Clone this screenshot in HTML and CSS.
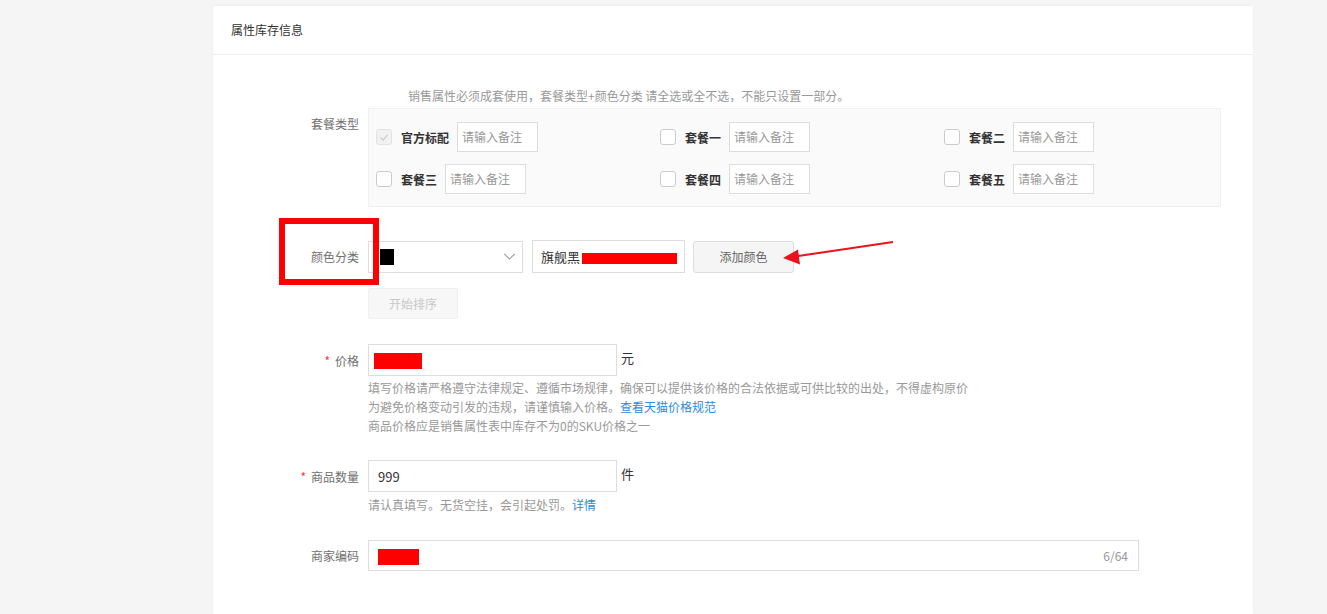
FILE: index.html
```html
<!DOCTYPE html>
<html lang="zh-CN">
<head>
<meta charset="utf-8">
<title>属性库存信息</title>
<link rel="stylesheet" href="styles.css">
</head>
<body>
<div class="page">
  <div class="card">
    <div class="card-head">属性库存信息</div>
    <div class="card-body">
      <div class="notice">销售属性必须成套使用，套餐类型+颜色分类 请全选或全不选，不能只设置一部分。</div>

      <div class="row row-set">
        <div class="label label-top">套餐类型</div>
        <div class="set-box">
          <div class="set-item">
            <span class="check check-disabled"><svg viewBox="0 0 16 16" width="14" height="14"><path d="M4 8.5l3 3 5-6" fill="none" stroke="#c8c8c8" stroke-width="1.4"/></svg></span>
            <span class="set-name">官方标配</span>
            <span class="note-input">请输入备注</span>
          </div>
          <div class="set-item">
            <span class="check"></span>
            <span class="set-name">套餐一</span>
            <span class="note-input">请输入备注</span>
          </div>
          <div class="set-item">
            <span class="check"></span>
            <span class="set-name">套餐二</span>
            <span class="note-input">请输入备注</span>
          </div>
          <div class="set-item">
            <span class="check"></span>
            <span class="set-name">套餐三</span>
            <span class="note-input">请输入备注</span>
          </div>
          <div class="set-item">
            <span class="check"></span>
            <span class="set-name">套餐四</span>
            <span class="note-input">请输入备注</span>
          </div>
          <div class="set-item">
            <span class="check"></span>
            <span class="set-name">套餐五</span>
            <span class="note-input">请输入备注</span>
          </div>
        </div>
      </div>

      <div class="row row-color">
        <div class="label">颜色分类</div>
        <div class="color-select">
          <span class="swatch"></span>
          <svg class="chev" viewBox="0 0 14 8" width="13" height="7"><path d="M1 1l6 6 6-6" fill="none" stroke="#999" stroke-width="1.2"/></svg>
        </div>
        <div class="color-name"><span>旗舰黑</span><span class="redact redact-color"></span></div>
        <div class="btn-add">添加颜色</div>
      </div>

      <div class="sort-row">
        <div class="btn-sort">开始排序</div>
      </div>

      <div class="row row-price">
        <div class="label"><span class="req">*</span>价格</div>
        <div class="text-input price-input"><span class="redact redact-price"></span></div>
        <span class="unit">元</span>
      </div>
      <div class="hints">
        <div>填写价格请严格遵守法律规定、遵循市场规律，确保可以提供该价格的合法依据或可供比较的出处，不得虚构原价</div>
        <div>为避免价格变动引发的违规，请谨慎输入价格。<a class="link">查看天猫价格规范</a></div>
        <div>商品价格应是销售属性表中库存不为0的SKU价格之一</div>
      </div>

      <div class="row row-qty">
        <div class="label"><span class="req">*</span>商品数量</div>
        <div class="text-input qty-input">999</div>
        <span class="unit">件</span>
      </div>
      <div class="hints hints-qty">
        <div>请认真填写。无货空挂，会引起处罚。<a class="link">详情</a></div>
      </div>

      <div class="row row-code">
        <div class="label">商家编码</div>
        <div class="text-input code-input"><span class="redact redact-code"></span><span class="count">6/64</span></div>
      </div>
    </div>
  </div>

  <div class="mark-box"></div>
  <svg class="arrow" width="1327" height="614" viewBox="0 0 1327 614">
    <line x1="893" y1="242" x2="795" y2="256.5" stroke="#e8141b" stroke-width="2"/>
    <path d="M783 258 L798 249.5 L800 264.5 Z" fill="#e8141b"/>
  </svg>
</div>
</body>
</html>
```

FILE: styles.css
```css
* { box-sizing: border-box; }
html, body { margin: 0; padding: 0; }
body {
  background: #f5f5f5;
  font-family: "Noto Sans CJK SC", "Liberation Sans", sans-serif;
  font-size: 12px;
  color: #333;
  width: 1327px;
  height: 614px;
  overflow: hidden;
}
.page {
  position: relative;
  padding: 6px 0 0 213px;
  height: 614px;
}
.card {
  width: 1040px;
  height: 608px;
  background: #fff;
  box-shadow: 0 0 2px rgba(0,0,0,0.06);
}
.card-head {
  height: 49px;
  line-height: 48px;
  padding-left: 18px;
  color: #333;
  border-bottom: 1px solid #efefef;
}
.card-body { padding-top: 32px; }
.notice {
  margin-left: 195px;
  line-height: 18px;
  color: #999;
}
.row { display: flex; align-items: center; }
.label {
  width: 155px;
  padding-right: 9px;
  text-align: right;
  color: #707070;
  flex: none;
}
.label-top { align-self: flex-start; padding-top: 7px; line-height: 18px; }
.req { color: #f33; margin-right: 5px; }

.row-set { margin-top: 3px; }
.set-box {
  width: 853px;
  background: #fafafa;
  border: 1px solid #f0f0f0;
  padding: 13px 0 12px 7px;
  display: grid;
  grid-template-columns: 284px 284px 1fr;
  row-gap: 12px;
}
.set-item { display: flex; align-items: center; height: 30px; }
.check {
  width: 16px; height: 16px;
  border: 1px solid #ccc;
  border-radius: 3px;
  background: #fff;
  margin-right: 9px;
  display: flex; align-items: center; justify-content: center;
}
.check-disabled { background: #f2f2f2; border-color: #e2e2e2; }
.set-name { font-weight: bold; color: #333; margin-right: 8px; }
.note-input {
  width: 81px; height: 30px;
  border: 1px solid #ddd;
  background: #fff;
  color: #999;
  padding-left: 4px;
  line-height: 28px;
}

.row-color { margin-top: 33px; }
.color-select {
  width: 155px; height: 32px;
  border: 1px solid #ddd;
  display: flex; align-items: center; justify-content: space-between;
  padding: 0 6px 0 11px;
}
.swatch { width: 14px; height: 16px; background: #000; }
.color-name {
  margin-left: 9px;
  width: 153px; height: 33px;
  border: 1px solid #ddd;
  display: flex; align-items: center;
  padding-left: 8px;
  font-size: 13px;
  color: #333;
  white-space: nowrap;
  overflow: hidden;
}
.redact { display: inline-block; background: #f00; }
.redact-color { width: 95px; height: 11px; margin-left: 2px; margin-top: 4px; }
.btn-add {
  margin-left: 8px;
  width: 101px; height: 32px;
  border: 1px solid #ddd;
  border-radius: 3px;
  background: #f5f5f5;
  color: #666;
  display: flex; align-items: center; justify-content: center;
}
.sort-row { margin-top: 15px; padding-left: 155px; }
.btn-sort {
  width: 90px; height: 31px;
  background: #f7f7f7;
  border: 1px solid #f0f0f0;
  border-radius: 2px;
  color: #c8c8c8;
  display: flex; align-items: center; justify-content: center;
}

.row-price { margin-top: 25px; }
.text-input {
  height: 32px;
  border: 1px solid #ddd;
  display: flex; align-items: center;
  padding-left: 8px;
  font-size: 13px;
}
.price-input { width: 249px; padding-left: 5px; }
.redact-price { width: 48px; height: 16px; margin-top: 1px; }
.unit { align-self: flex-start; margin-left: 4px; margin-top: 4px; font-size: 13px; color: #333; }
.hints {
  margin-top: 2px;
  padding-left: 155px;
  color: #999;
  line-height: 19px;
}
.link { color: #3089dc; text-decoration: none; }

.row-qty { margin-top: 25px; }
.qty-input { width: 249px; padding-left: 9px; color: #333; }
.hints-qty { margin-top: 3px; }

.row-code { margin-top: 26px; }
.code-input { width: 771px; height: 31px; justify-content: space-between; padding: 0 10px 0 9px; }
.redact-code { width: 41px; height: 16px; margin-top: 2px; }
.count { color: #999; font-size: 12px; }

.mark-box {
  position: absolute;
  left: 279px; top: 218px;
  width: 100px; height: 67px;
  border: 6px solid #f00;
}
.arrow { position: absolute; left: 0; top: 0; pointer-events: none; }
```
